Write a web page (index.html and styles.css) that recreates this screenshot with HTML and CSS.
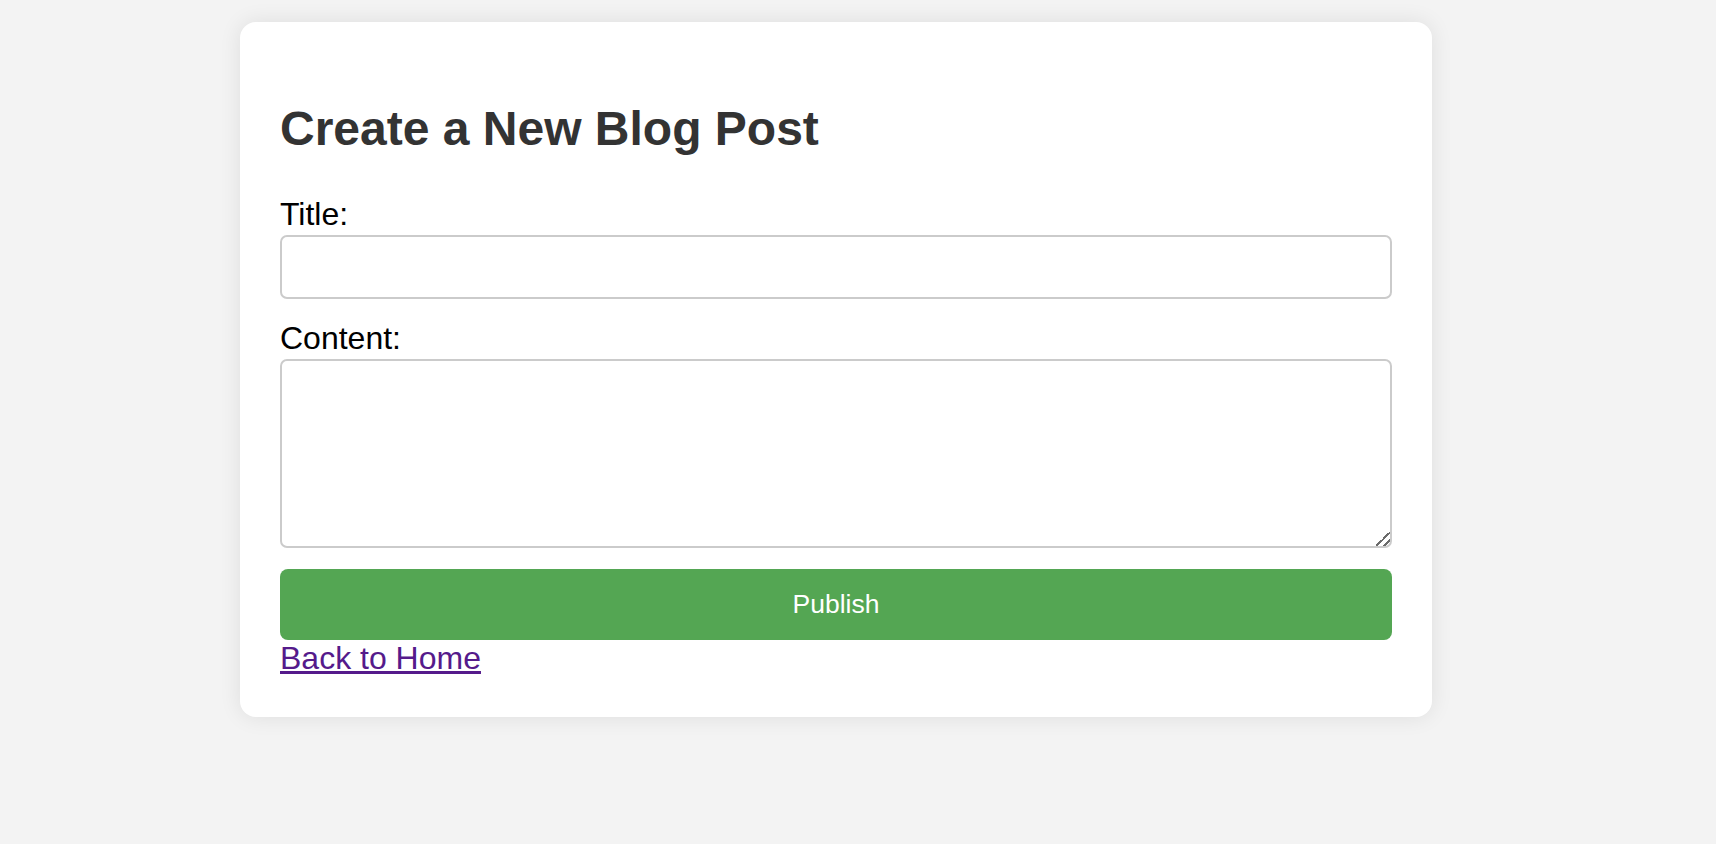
FILE: index.html
```html
<!DOCTYPE html>
<html lang="en">
<head>
<meta charset="utf-8">
<title>Create a New Blog Post</title>
<link rel="stylesheet" href="styles.css">
</head>
<body>
  <div class="card">
    <h1 class="card-title">Create a New Blog Post</h1>
    <form class="post-form">
      <label class="field-label" for="title">Title:</label>
      <input class="field-input" type="text" id="title" name="title">
      <label class="field-label" for="content">Content:</label>
      <textarea class="field-textarea" id="content" name="content"></textarea>
      <button class="publish-btn" type="button">Publish</button>
    </form>
    <a class="back-link" href="#">Back to Home</a>
  </div>
</body>
</html>
```

FILE: styles.css
```css
html, body {
  margin: 0;
  padding: 0;
}

body {
  background: #f3f3f3;
  font-family: "Liberation Sans", Arial, sans-serif;
  min-height: 844px;
}

.card {
  box-sizing: border-box;
  width: 1192px;
  margin: 22px 0 0 240px;
  padding: 40px 40px 41px;
  background: #fff;
  border-radius: 16px;
  box-shadow: 0 0 22px rgba(0, 0, 0, 0.09);
}

.card-title {
  margin: 40px 0 40px;
  font-size: 48px;
  font-weight: bold;
  color: #333;
  line-height: 54px;
}

.post-form {
  display: flex;
  flex-direction: column;
}

.field-label {
  font-size: 32px;
  line-height: 36px;
  color: #000;
  margin-bottom: 3px;
}

.field-input,
.field-textarea {
  box-sizing: border-box;
  width: 100%;
  border: 2px solid #cbcbcb;
  border-radius: 7px;
  background: #fff;
  font-family: "Liberation Sans", Arial, sans-serif;
  font-size: 26px;
  padding: 8px 12px;
  margin: 0 0 21px;
}

.field-input {
  height: 64px;
}

.field-textarea {
  height: 189px;
  resize: vertical;
}

.field-textarea::-webkit-resizer {
  background: linear-gradient(135deg,
    transparent 0 50%,
    #6b6b6b 50% 59%,
    transparent 59% 76%,
    #6b6b6b 76% 85%,
    transparent 85%);
}

.publish-btn {
  height: 71px;
  width: 100%;
  border: none;
  border-radius: 8px;
  background: #54a653;
  color: #fff;
  font-family: "Liberation Sans", Arial, sans-serif;
  font-size: 26.5px;
  cursor: pointer;
}

.back-link {
  display: inline-block;
  font-size: 32px;
  line-height: 36px;
  color: #551a8b;
  text-decoration: underline;
}
```
